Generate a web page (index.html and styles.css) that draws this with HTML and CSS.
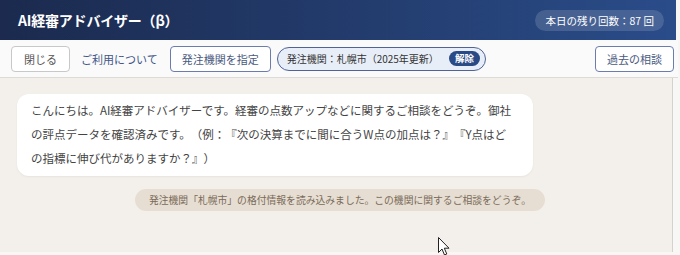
FILE: index.html
```html
<!DOCTYPE html>
<html lang="ja">
<head>
    <meta charset="UTF-8">
    <meta name="viewport" content="width=device-width, initial-scale=1.0">
    <title>AI経審アドバイザー</title>
    <link rel="stylesheet" href="styles.css">
</head>
<body>
    <div class="panel">
        <header class="header">
            <h1>AI経審アドバイザー（β）</h1>
            <span class="quota">本日の残り回数：87 回</span>
        </header>

        <div class="toolbar">
            <button class="btn">閉じる</button>
            <a href="#" class="link">ご利用について</a>
            <button class="btn btn-blue">発注機関を指定</button>
            <div class="agency">
                発注機関：札幌市（2025年更新）
                <button class="clear">解除</button>
            </div>
            <button class="btn btn-blue history">過去の相談</button>
        </div>

        <div class="chat">
            <div class="bubble">
                こんにちは。AI経審アドバイザーです。経審の点数アップなどに関するご相談をどうぞ。御社の評点データを確認済みです。（例：『次の決算までに間に合うW点の加点は？』『Y点はどの指標に伸び代がありますか？』）
            </div>
            <div class="notice">発注機関「札幌市」の格付情報を読み込みました。この機関に関するご相談をどうぞ。</div>
        </div>
    </div>

    <svg class="cursor" width="12" height="19" viewBox="0 0 12 19">
        <path d="M0.5 0.5 L0.5 15.5 L4 12 L6.5 18 L8.8 17 L6.3 11.2 L11 11.2 Z" fill="#fff" stroke="#222" stroke-width="1"/>
    </svg>
</body>
</html>
```

FILE: styles.css
```css
body {
    margin: 0;
    padding: 0;
    font-family: "Noto Sans CJK JP", "Noto Sans", sans-serif;
    text-spacing-trim: space-all;
    background: #f8f7f5;
    width: 680px;
    height: 255px;
    overflow: hidden;
    position: relative;
}

.panel {
    width: 672px;
    height: 252px;
    border-right: 1px solid #d4d2ce;
    background: #f3f0eb;
    display: flex;
    flex-direction: column;
}

.header {
    height: 40px;
    background: linear-gradient(to right, #1b2a4e, #2a4c89);
    display: flex;
    align-items: center;
    justify-content: space-between;
    padding: 0 12px 0 18px;
    box-sizing: border-box;
    width: 676px;
}

.header h1 {
    margin: 0;
    color: #fff;
    font-size: 14px;
    font-weight: bold;
    letter-spacing: -0.2px;
}

.quota {
    background: rgba(255, 255, 255, 0.14);
    color: #fff;
    font-size: 10.5px;
    padding: 3px 10px;
    border-radius: 11px;
    line-height: 15px;
}

.toolbar {
    height: 38px;
    background: #fafafa;
    border-bottom: 1px solid #dedbd6;
    display: flex;
    align-items: center;
    padding: 0 4px 0 11px;
    box-sizing: border-box;
    width: 678px;
}

.btn {
    font-family: inherit;
    font-size: 11px;
    color: #555;
    background: #fff;
    border: 1px solid #c8c8c8;
    border-radius: 4px;
    height: 26px;
    padding: 0 12px;
    cursor: pointer;
}

.btn-blue {
    border-color: #6a7dac;
    color: #4a5a80;
    padding: 0 11px;
}

.link {
    color: #3f5588;
    text-decoration: none;
    font-size: 11px;
    margin: 0 12px 0 11px;
}

.agency {
    margin-left: 6px;
    height: 22px;
    display: flex;
    align-items: center;
    background: #e8eef8;
    border: 1.5px solid #4f6396;
    border-radius: 13px;
    padding: 0 5px 0 9px;
    font-size: 10px;
    color: #333;
}

.clear {
    margin-left: 10px;
    font-family: inherit;
    font-size: 9.5px;
    font-weight: bold;
    color: #fff;
    background: #2a4a85;
    border: none;
    border-radius: 8px;
    height: 15px;
    padding: 0 6px;
    line-height: 15px;
}

.history {
    margin-left: auto;
}

.chat {
    padding: 16px 0 0 17px;
}

.bubble {
    width: 516px;
    box-sizing: border-box;
    background: #fff;
    border-radius: 12px;
    padding: 4px 18px 6px 14px;
    font-size: 11.5px;
    line-height: 24px;
    color: #444;
    box-shadow: 0 1px 2px rgba(0, 0, 0, 0.05);
}

.notice {
    margin: 13px 0 0 118px;
    width: 410px;
    box-sizing: border-box;
    text-align: center;
    background: #e6ded3;
    color: #7a6a58;
    font-size: 9.8px;
    line-height: 22px;
    border-radius: 11px;
}

.cursor {
    position: absolute;
    left: 438px;
    top: 237px;
}
```
